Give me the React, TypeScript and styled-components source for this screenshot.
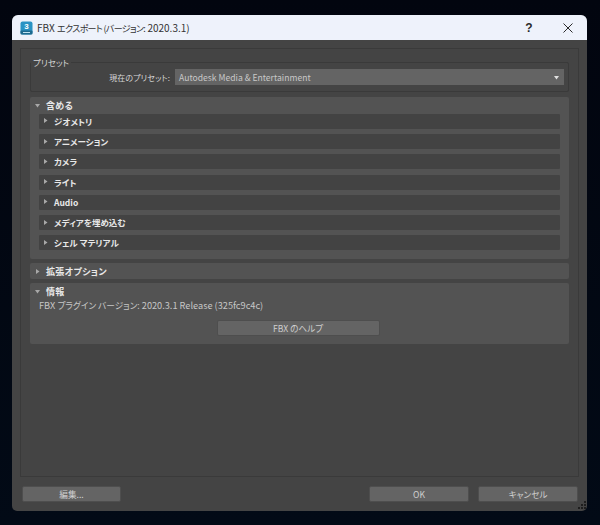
import React from "react";
import styled, { createGlobalStyle } from "styled-components";

const GlobalStyle = createGlobalStyle`
  html, body {
    margin: 0;
    padding: 0;
    background: #020914;
  }
`;

const Desktop = styled.div`
  width: 600px;
  height: 525px;
  box-sizing: border-box;
  padding: 15px 13px 14px 12px;
  background: linear-gradient(180deg, #02050f 0%, #020a16 100%);
  overflow: hidden;
  font-family: "Noto Sans CJK JP", "Noto Sans", sans-serif;
  font-feature-settings: "palt";
`;

const Window = styled.div`
  position: relative;
  height: 100%;
  display: flex;
  flex-direction: column;
  border-radius: 6px 6px 5px 5px;
  overflow: hidden;
  background: #444444;
`;

const TitleBar = styled.div`
  height: 25px;
  flex: none;
  display: flex;
  align-items: center;
  padding-left: 8px;
  background: #eef2fb;
  color: #333;
  font-size: 10px;
`;

const TitleText = styled.span`
  margin-left: 4px;
  flex: 1;
  white-space: nowrap;
`;

// the kana in the original are narrower than its latin text
const Kana = styled.span<{ $size: number; $tracking: number }>`
  font-size: ${(p) => p.$size}px;
  letter-spacing: ${(p) => p.$tracking}px;
`;

const TitleButton = styled.span<{ $width: number }>`
  width: ${(p) => p.$width}px;
  display: flex;
  justify-content: center;
  font-family: "Liberation Sans", sans-serif;
  font-size: 12px;
  font-weight: bold;
  color: #2a2a2a;
`;

const Frame = styled.div`
  margin: 8px 8px 0 8px;
  height: 429px;
  flex: none;
  box-sizing: border-box;
  border: 1px solid #3a3a3a;
  padding: 9px 9px 0 9px;
  display: flex;
  flex-direction: column;
  gap: 4px;
`;

const PresetGroup = styled.fieldset`
  margin: 0 0 1px;
  height: 34px;
  box-sizing: border-box;
  border: 1px solid #3a3a3a;
  border-radius: 2px;
  padding: 2px 4px 0 0;
  display: flex;
  align-items: center;
  min-width: 0;
`;

const GroupLegend = styled.legend`
  margin-left: 0;
  padding: 0 2px;
  font-size: 8.5px;
  line-height: 9px;
  color: #d4d4d4;
`;

const PresetLabel = styled.span`
  width: 139px;
  flex: none;
  text-align: right;
  font-size: 8px;
  letter-spacing: 0.1px;
  color: #d6d6d6;
  white-space: nowrap;
`;

const Select = styled.div`
  margin-left: 5px;
  flex: 1;
  height: 16px;
  display: flex;
  align-items: center;
  justify-content: space-between;
  padding: 0 5px 0 4px;
  background: #646464;
  font-size: 8.6px;
  color: #c8c8c8;
`;

const Section = styled.section<{ $height: number }>`
  height: ${(p) => p.$height}px;
  flex: none;
  box-sizing: border-box;
  background: #535353;
  border-radius: 2px;
  padding: 0 9px 0 0;
`;

const SectionHead = styled.div`
  display: flex;
  align-items: center;
  height: 16px;
  padding-left: 5px;
  gap: 6px;
  font-size: 9px;
  font-weight: bold;
  letter-spacing: 0.3px;
  color: #e8e8e8;
  white-space: nowrap;
`;

const Rows = styled.div`
  margin: 0.8px 0 0 9px;
  display: flex;
  flex-direction: column;
  gap: 5.25px;
`;

const Row = styled.div`
  height: 15px;
  box-sizing: border-box;
  display: flex;
  align-items: center;
  gap: 6px;
  padding: 0 0 1px 4px;
  background: #434343;
  border-radius: 1px;
  font-size: 8.5px;
  font-weight: bold;
  color: #e8e8e8;
  white-space: nowrap;
`;

const InfoLine = styled.div`
  padding-left: 9px;
  height: 12px;
  font-size: 9.2px;
  line-height: 12px;
  color: #c6c6c6;
  white-space: nowrap;
`;

const HelpRow = styled.div`
  margin-top: 9px;
  display: flex;
  justify-content: center;
  padding-left: 6px;
`;

const Button = styled.button<{ $width: number }>`
  width: ${(p) => p.$width}px;
  height: 16px;
  padding: 0;
  border: 1px solid #4e4e4e;
  border-radius: 2px;
  background: #646464;
  color: #cfcfcf;
  font-family: inherit;
  font-feature-settings: inherit;
  font-size: 8.6px;
  line-height: 14px;
`;

const Footer = styled.div`
  margin-top: 9px;
  padding: 0 9px 0 10px;
  display: flex;
  gap: 9px;
`;

const Spacer = styled.div`
  flex: 1;
`;

const ResizeGrip = styled.svg`
  position: absolute;
  right: 0;
  bottom: 1px;
`;

const Triangle = ({ down, color = "#a8a8a8" }: { down?: boolean; color?: string }) => (
  <svg width="5" height="5" viewBox="0 0 5 5" style={{ flex: "none" }}>
    <path d={down ? "M0 1h5L2.5 4.5z" : "M1 0v5l3.5-2.5z"} fill={color} />
  </svg>
);

const AppIcon = () => (
  <svg width="13" height="14" viewBox="0 0 13 14">
    <rect x="0.5" y="0.5" width="12" height="13" rx="2" fill="#2b93c4" />
    <rect x="0.5" y="9.5" width="12" height="4" rx="1" fill="#1d6a8f" />
    <text x="6.5" y="8" fontSize="8" fontWeight="bold" textAnchor="middle" fill="#fff" fontFamily="Liberation Sans">
      3
    </text>
    <rect x="3" y="11" width="7" height="1" fill="#bfe3f2" />
  </svg>
);

const CloseIcon = () => (
  <svg width="10" height="10" viewBox="0 0 10 10">
    <path d="M0.5 0.5l9 9M9.5 0.5l-9 9" stroke="#2a2a2a" strokeWidth="1" />
  </svg>
);

const includeRows = [
  "ジオメトリ",
  "アニメーション",
  "カメラ",
  "ライト",
  "Audio",
  "メディアを埋め込む",
  "シェル マテリアル",
];

export default function App() {
  return (
    <Desktop>
      <GlobalStyle />
      <Window>
        <TitleBar>
          <AppIcon />
          <TitleText>
            FBX <Kana $size={9} $tracking={-0.65}>エクスポート (バージョン:</Kana> 2020.3.1)
          </TitleText>
          <TitleButton $width={40}>?</TitleButton>
          <TitleButton $width={38}>
            <CloseIcon />
          </TitleButton>
        </TitleBar>
        <Frame>
          <PresetGroup>
            <GroupLegend>プリセット</GroupLegend>
            <PresetLabel>現在のプリセット:</PresetLabel>
            <Select>
              Autodesk Media &amp; Entertainment
              <Triangle down color="#e0e0e0" />
            </Select>
          </PresetGroup>
          <Section $height={162}>
            <SectionHead>
              <Triangle down />
              含める
            </SectionHead>
            <Rows>
              {includeRows.map((label) => (
                <Row key={label}>
                  <Triangle />
                  {label}
                </Row>
              ))}
            </Rows>
          </Section>
          <Section $height={16}>
            <SectionHead>
              <Triangle />
              拡張オプション
            </SectionHead>
          </Section>
          <Section $height={61}>
            <SectionHead>
              <Triangle down />
              情報
            </SectionHead>
            <InfoLine>
              FBX <Kana $size={8.7} $tracking={0}>プラグイン バージョン:</Kana> 2020.3.1 Release (325fc9c4c)
            </InfoLine>
            <HelpRow>
              <Button $width={163}>FBX のヘルプ</Button>
            </HelpRow>
          </Section>
        </Frame>
        <Footer>
          <Button $width={99}>編集...</Button>
          <Spacer />
          <Button $width={100}>OK</Button>
          <Button $width={100}>キャンセル</Button>
        </Footer>
        <ResizeGrip width="9" height="9" viewBox="0 0 9 9">
          <path d="M6 0h2v2H6zM6 3h2v2H6zM3 3h2v2H3zM6 6h2v2H6zM3 6h2v2H3zM0 6h2v2H0z" fill="#1e1e1e" />
        </ResizeGrip>
      </Window>
    </Desktop>
  );
}
